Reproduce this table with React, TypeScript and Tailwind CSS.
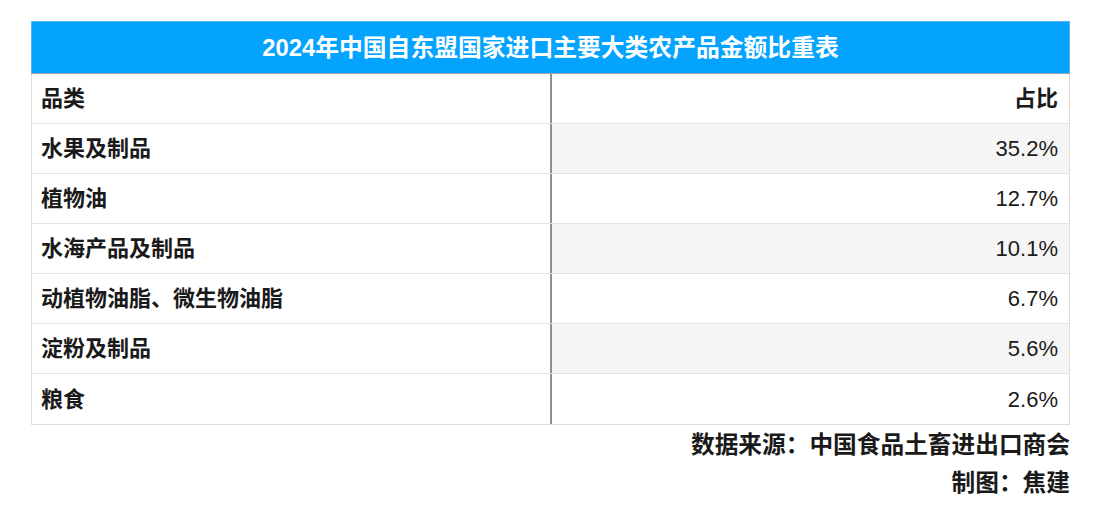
import React from "react";

const rows: [string, string][] = [
  ["水果及制品", "35.2%"],
  ["植物油", "12.7%"],
  ["水海产品及制品", "10.1%"],
  ["动植物油脂、微生物油脂", "6.7%"],
  ["淀粉及制品", "5.6%"],
  ["粮食", "2.6%"],
];

const font = { fontFamily: '"Liberation Sans", "Noto Sans CJK SC", sans-serif' } as const;

export default function App() {
  return (
    <div className="w-[1108px] h-[520px] bg-white text-[#1a1a1a]" style={font}>
      <div className="pl-[31px] pt-[21px] w-[1070px]">
        <div className="h-[53px] bg-[#03a3fe] border border-[#4fb8f5] border-b-[#9aa3aa] flex items-center justify-center text-white text-[23.8px] font-bold">
          2024年中国自东盟国家进口主要大类农产品金额比重表
        </div>
        <div className="border-x border-b border-[#dcdcdc]">
          <div className="flex h-[50px] border-b border-[#e3e3e3]">
            <div className="w-[518px] flex items-center pl-[9px] text-[22px] font-bold">品类</div>
            <div className="w-[2px] bg-[#8f8f8f]" />
            <div className="flex-1 flex items-center justify-end pr-[11px] text-[22px] font-bold">占比</div>
          </div>
          {rows.map(([name, pct], i) => (
            <div key={name} className={`flex h-[50px] ${i < rows.length - 1 ? "border-b border-[#e3e3e3]" : ""}`}>
              <div className="w-[518px] flex items-center pl-[9px] text-[22px] font-semibold">{name}</div>
              <div className="w-[2px] bg-[#8f8f8f]" />
              <div className={`flex-1 flex items-center justify-end pr-[11px] text-[22px] ${i % 2 === 0 ? "bg-[#f5f5f5]" : "bg-white"}`}>{pct}</div>
            </div>
          ))}
        </div>
        <div className="flex flex-col items-end text-[23.7px] font-bold leading-[38px] pt-[1px]">
          <div>数据来源：中国食品土畜进出口商会</div>
          <div>制图：焦建</div>
        </div>
      </div>
    </div>
  );
}
